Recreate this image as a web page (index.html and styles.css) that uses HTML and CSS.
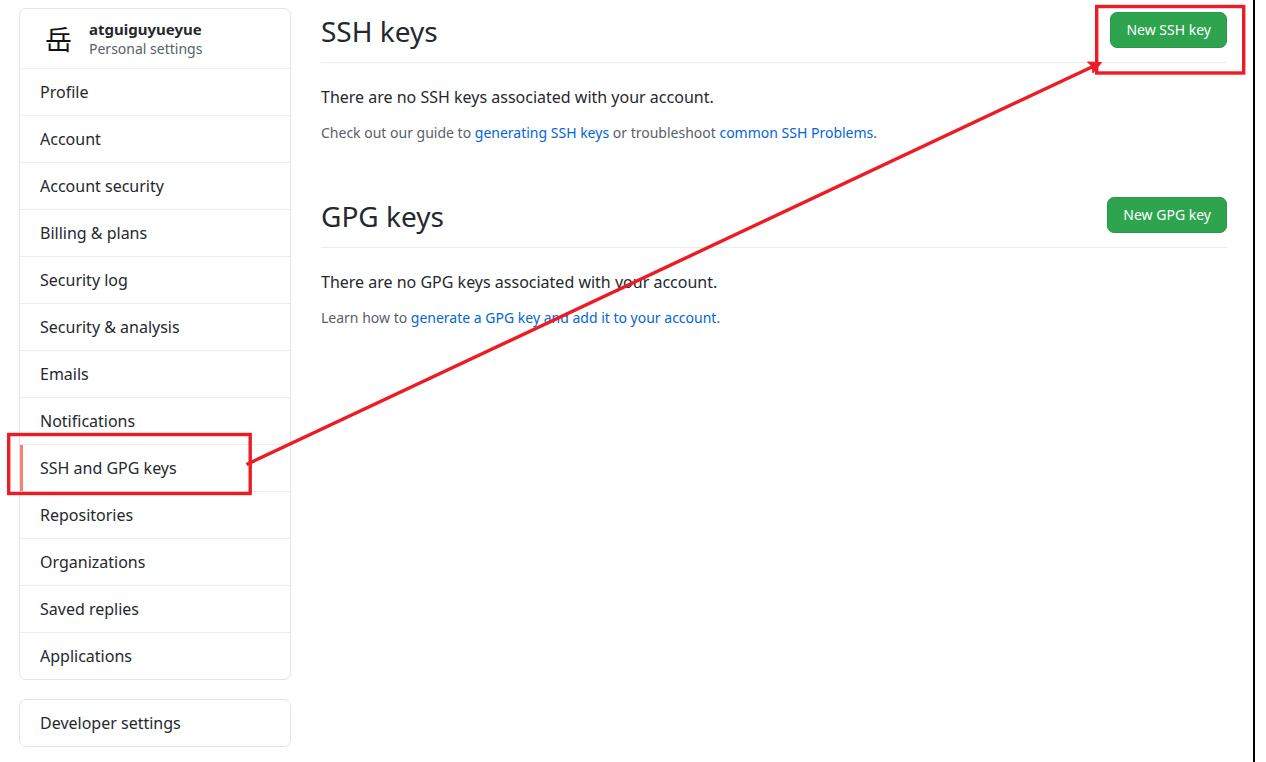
FILE: index.html
```html
<!DOCTYPE html>
<html lang="en">
<head>
<meta charset="utf-8">
<title>SSH and GPG keys</title>
<link rel="stylesheet" href="styles.css">
</head>
<body>
<div class="page">
  <aside class="sidebar">
    <nav class="menu" aria-label="Personal settings">
      <div class="user">
        <span class="avatar">岳</span>
        <div class="user-text">
          <strong class="user-name">atguiguyueyue</strong>
          <span class="user-note">Personal settings</span>
        </div>
      </div>
      <a class="item" href="#">Profile</a>
      <a class="item" href="#">Account</a>
      <a class="item" href="#">Account security</a>
      <a class="item" href="#">Billing &amp; plans</a>
      <a class="item" href="#">Security log</a>
      <a class="item" href="#">Security &amp; analysis</a>
      <a class="item" href="#">Emails</a>
      <a class="item" href="#">Notifications</a>
      <a class="item current" href="#" aria-current="page">SSH and GPG keys</a>
      <a class="item" href="#">Repositories</a>
      <a class="item" href="#">Organizations</a>
      <a class="item" href="#">Saved replies</a>
      <a class="item" href="#">Applications</a>
    </nav>
    <nav class="menu" aria-label="Developer">
      <a class="item" href="#">Developer settings</a>
    </nav>
  </aside>
  <main class="content">
    <section class="keys">
      <header class="subhead">
        <h2 class="title">SSH keys</h2>
        <button class="button" type="button">New SSH key</button>
      </header>
      <p class="message">There are no SSH keys associated with your account.</p>
      <p class="help">Check out our guide to <a class="link" href="#">generating SSH keys</a> or troubleshoot <a class="link" href="#">common SSH Problems</a>.</p>
    </section>
    <section class="keys">
      <header class="subhead">
        <h2 class="title">GPG keys</h2>
        <button class="button" type="button">New GPG key</button>
      </header>
      <p class="message">There are no GPG keys associated with your account.</p>
      <p class="help">Learn how to <a class="link" href="#">generate a GPG key and add it to your account</a>.</p>
    </section>
  </main>
</div>
<svg class="marks" width="1266" height="762" viewBox="0 0 1266 762" aria-hidden="true">
  <rect x="8.700" y="434.500" width="241.500" height="59" />
  <rect x="1096.700" y="6.500" width="147" height="66.500" />
  <path d="M246.500 464.500L1094 66" />
  <path class="head" d="M1101.500 62.500L1087.500 62L1092 66.500L1093 73Z" />
</svg>
</body>
</html>
```
FILE: styles.css
```css
* {
  box-sizing: border-box;
}

body {
  margin: 0;
  background: #fff;
  color: #24292e;
  font-family: "Noto Sans", "Noto Sans CJK SC", sans-serif;
  font-size: 16px;
  line-height: 24px;
}

.page {
  display: flex;
  align-items: flex-start;
  gap: 30px;
  min-height: 100vh;
  margin-right: 11px;
  padding: 8px 26px 13px 19px;
  border-right: 2px solid #000;
}

.sidebar {
  display: flex;
  flex: 0 0 272px;
  flex-direction: column;
  gap: 19px;
}

.menu {
  overflow: hidden;
  border: 1px solid #e1e4e8;
  border-radius: 7px;
}

.user {
  display: flex;
  align-items: center;
  gap: 16px;
  padding: 10px 20px 9px 24px;
}

.avatar {
  width: 29px;
  color: #111;
  font-family: "Noto Sans CJK SC", sans-serif;
  font-size: 27px;
  line-height: 36px;
  text-align: center;
}

.user-text {
  display: flex;
  flex-direction: column;
  font-size: 14px;
  line-height: 20px;
}

.user-name {
  font-size: 15px;
  font-weight: 700;
}

.user-note {
  color: #586069;
}

.item {
  display: block;
  padding: 11px 20px;
  border-top: 1px solid #eaecef;
  color: #24292e;
  text-decoration: none;
}

.item:first-child {
  border-top: 0;
}

.current {
  box-shadow: inset 3px 0 #f9826c;
}

.content {
  display: flex;
  flex: 1;
  flex-direction: column;
  gap: 48px;
  min-width: 0;
}

.subhead {
  display: flex;
  align-items: center;
  justify-content: space-between;
  padding: 5px 0 13px;
  border-bottom: 1px solid #eaecef;
}

.title {
  margin: 0;
  font-size: 28px;
  font-weight: 400;
  line-height: 36px;
}

.button {
  margin-top: -2px;
  padding: 5px 15px;
  border: 1px solid #2a9749;
  border-radius: 7px;
  background: #2ea44f;
  color: #fff;
  font: inherit;
  font-size: 14px;
}

.message {
  margin: 22px 0 12px;
}

.help {
  margin: 0;
  color: #586069;
  font-size: 14px;
}

.link {
  color: #0366d6;
  text-decoration: none;
}

.marks {
  position: absolute;
  top: 0;
  left: 0;
  fill: none;
  stroke: #ed1c24;
  stroke-width: 3.4;
  pointer-events: none;
}

.head {
  fill: #ed1c24;
  stroke-width: 1;
}
```
